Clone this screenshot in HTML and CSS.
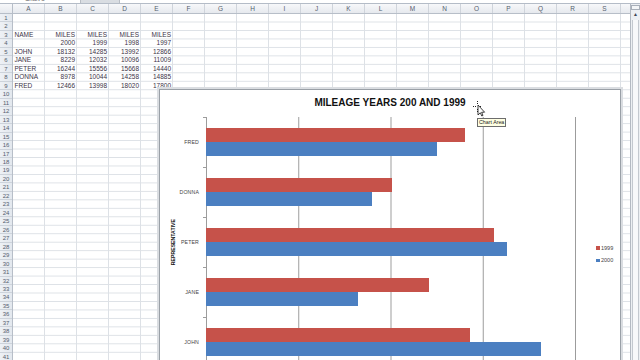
FILE: index.html
```html
<!DOCTYPE html>
<html>
<head>
<meta charset="utf-8">
<link rel="stylesheet" href="styles.css">
</head>
<body>
<div class="topbar"><span class="namebox">Chart 3</span><span class="fxbtn"></span></div>
<div class="sheet">
  <div class="main">
    <div class="colhead">
      <div class="corner"></div>
      <div class="ch">A</div><div class="ch">B</div><div class="ch">C</div><div class="ch">D</div><div class="ch">E</div>
      <div class="ch">F</div><div class="ch">G</div><div class="ch">H</div><div class="ch">I</div><div class="ch">J</div>
      <div class="ch">K</div><div class="ch">L</div><div class="ch">M</div><div class="ch">N</div><div class="ch">O</div>
      <div class="ch">P</div><div class="ch">Q</div><div class="ch">R</div><div class="ch">S</div><div class="ch ch-part"></div>
    </div>
    <div class="grid">
      <div class="rowhead">
        <div class="rh">1</div><div class="rh">2</div><div class="rh">3</div><div class="rh">4</div><div class="rh">5</div>
        <div class="rh">6</div><div class="rh">7</div><div class="rh">8</div><div class="rh">9</div><div class="rh">10</div>
        <div class="rh">11</div><div class="rh">12</div><div class="rh">13</div><div class="rh">14</div><div class="rh">15</div>
        <div class="rh">16</div><div class="rh">17</div><div class="rh">18</div><div class="rh">19</div><div class="rh">20</div>
        <div class="rh">21</div><div class="rh">22</div><div class="rh">23</div><div class="rh">24</div><div class="rh">25</div>
        <div class="rh">26</div><div class="rh">27</div><div class="rh">28</div><div class="rh">29</div><div class="rh">30</div>
        <div class="rh">31</div><div class="rh">32</div><div class="rh">33</div><div class="rh">34</div><div class="rh">35</div>
        <div class="rh">36</div><div class="rh">37</div><div class="rh">38</div><div class="rh">39</div><div class="rh">40</div>
        <div class="rh">41</div>
      </div>
      <div class="cells">
        <div class="row"></div>
        <div class="row"></div>
        <div class="row"><div class="c t">NAME</div><div class="c n">MILES</div><div class="c n">MILES</div><div class="c n">MILES</div><div class="c n">MILES</div></div>
        <div class="row"><div class="c t"></div><div class="c n">2000</div><div class="c n">1999</div><div class="c n">1998</div><div class="c n">1997</div></div>
        <div class="row"><div class="c t">JOHN</div><div class="c n">18132</div><div class="c n">14285</div><div class="c n">13992</div><div class="c n">12866</div></div>
        <div class="row"><div class="c t">JANE</div><div class="c n">8229</div><div class="c n">12032</div><div class="c n">10096</div><div class="c n">11009</div></div>
        <div class="row"><div class="c t">PETER</div><div class="c n">16244</div><div class="c n">15556</div><div class="c n">15668</div><div class="c n">14440</div></div>
        <div class="row"><div class="c t">DONNA</div><div class="c n">8978</div><div class="c n">10044</div><div class="c n">14258</div><div class="c n">14885</div></div>
        <div class="row"><div class="c t">FRED</div><div class="c n">12466</div><div class="c n">13998</div><div class="c n">18020</div><div class="c n">17800</div></div>
      </div>
    </div>
  </div>
  <div class="vscroll">
    <div class="split"></div>
    <div class="arrow">&#9650;</div>
    <div class="thumb"></div>
  </div>
</div>

<div class="chart">
  <div class="chart-title">MILEAGE YEARS 200 AND 1999</div>
  <div class="chart-body">
    <div class="ytitle-wrap"><div class="ytitle">REPRESENTATIVE</div></div>
    <div class="cat-labels">
      <div class="cl">FRED</div>
      <div class="cl">DONNA</div>
      <div class="cl">PETER</div>
      <div class="cl">JANE</div>
      <div class="cl">JOHN</div>
    </div>
    <div class="plot">
      <div class="cat"><div class="bar red" style="width:69.99%"></div><div class="bar blue" style="width:62.33%"></div></div>
      <div class="cat"><div class="bar red" style="width:50.22%"></div><div class="bar blue" style="width:44.89%"></div></div>
      <div class="cat"><div class="bar red" style="width:77.78%"></div><div class="bar blue" style="width:81.22%"></div></div>
      <div class="cat"><div class="bar red" style="width:60.16%"></div><div class="bar blue" style="width:41.15%"></div></div>
      <div class="cat"><div class="bar red" style="width:71.43%"></div><div class="bar blue" style="width:90.66%"></div></div>
    </div>
    <div class="legend">
      <div class="li"><span class="sw red"></span>1999</div>
      <div class="li"><span class="sw blue"></span>2000</div>
    </div>
  </div>
  <div class="tooltip">Chart Area</div>
  <svg class="cursor" width="14" height="16" viewBox="0 0 14 16">
    <g fill="#222">
      <rect x="5" y="0" width="1" height="1"/><rect x="5" y="2" width="1" height="1"/>
      <rect x="5" y="8" width="1" height="1"/><rect x="5" y="10" width="1" height="1"/>
      <rect x="1" y="5" width="1" height="1"/><rect x="3" y="5" width="1" height="1"/>
      <rect x="8" y="5" width="1" height="1"/>
    </g>
    <path d="M6 4 L6 14 L8.3 11.8 L9.8 15 L11 14.4 L9.6 11.3 L12.6 11.2 Z" fill="#fff" stroke="#111" stroke-width="0.8" stroke-linejoin="round"/>
  </svg>
</div>
</body>
</html>
```
FILE: styles.css
```css
html, body {
  margin: 0;
  padding: 0;
}
body {
  width: 640px;
  height: 360px;
  overflow: hidden;
  position: relative;
  background: #ffffff;
  font-family: "Liberation Sans", Arial, sans-serif;
}
.topbar {
  height: 3px;
  border-bottom: 1px solid #b4bcc7;
  background: #ffffff;
  position: relative;
  overflow: hidden;
  display: flex;
}
.namebox {
  font-size: 6px;
  line-height: 6px;
  margin-top: -4px;
  margin-left: 25px;
  color: #555;
  width: 55px;
}
.fxbtn {
  width: 38px;
  background: #d9dde2;
  border-left: 1px solid #b9bec5;
  border-right: 1px solid #b9bec5;
}
.sheet {
  display: flex;
  height: 356px;
}
.main {
  width: 630px;
  display: flex;
  flex-direction: column;
  overflow: hidden;
}
.colhead {
  display: flex;
  height: 10px;
  background: linear-gradient(#f7f8fa, #e6e9ee);
  border-bottom: 1px solid #b7bec8;
  box-sizing: border-box;
}
.corner {
  width: 13px;
  flex: none;
  border-right: 1px solid #b7bec8;
  box-sizing: border-box;
}
.ch {
  width: 32px;
  flex: none;
  box-sizing: border-box;
  border-right: 1px solid #cfd4db;
  font-size: 6.5px;
  line-height: 9px;
  text-align: center;
  color: #55606e;
}
.ch-part {
  width: 9px;
  border-right: none;
}
.grid {
  display: flex;
  flex: 1;
}
.rowhead {
  width: 13px;
  flex: none;
  background: linear-gradient(to right, #eef1f5, #e3e8ee);
  border-right: 1px solid #b7bec8;
  box-sizing: border-box;
}
.rh {
  height: 8.48px;
  box-sizing: border-box;
  border-bottom: 1px solid #cdd3db;
  font-size: 6px;
  line-height: 8px;
  text-align: center;
  color: #55606e;
}
.cells {
  flex: 1;
  background-image:
    linear-gradient(to right, transparent 31px, #dde1e6 31px),
    linear-gradient(to bottom, transparent 7.48px, #dde1e6 7.48px);
  background-size: 32px 100%, 100% 8.48px;
}
.row {
  height: 8.48px;
  display: flex;
}
.c {
  width: 32px;
  flex: none;
  box-sizing: border-box;
  font-size: 6.5px;
  line-height: 8px;
  color: #3c3447;
  white-space: nowrap;
}
.t {
  padding-left: 1.5px;
}
.n {
  text-align: right;
  padding-right: 2px;
}
.vscroll {
  width: 10px;
  flex: none;
  background: #eceff3;
  border-left: 1px solid #b3b9c2;
  box-sizing: border-box;
  display: flex;
  flex-direction: column;
  align-items: center;
}
.split {
  width: 7px;
  height: 3px;
  margin-top: 1px;
  border: 1px solid #a9b0ba;
  background: #f4f6f8;
}
.arrow {
  font-size: 5px;
  line-height: 7px;
  color: #3d4653;
  margin-top: 1px;
}
.thumb {
  flex: 1;
  width: 5px;
  margin-top: 2px;
  border-left: 1px solid #c3c8cf;
  border-right: 1px solid #c3c8cf;
  background: #f7f8fa;
}
.chart {
  position: absolute;
  left: 159px;
  top: 89px;
  width: 460px;
  height: 300px;
  background: #ffffff;
  border: 1px solid #9aa0a7;
  box-shadow: 0 0 0 2px #dadde1;
}
.chart-title {
  height: 27px;
  box-sizing: border-box;
  padding-top: 6px;
  text-align: center;
  font-weight: bold;
  font-size: 10px;
  line-height: 13px;
  color: #111;
}
.chart-body {
  display: flex;
  align-items: flex-start;
}
.ytitle-wrap {
  width: 18px;
  padding-left: 8px;
  box-sizing: border-box;
  height: 250px;
  display: flex;
  justify-content: center;
  align-items: center;
}
.ytitle {
  writing-mode: vertical-rl;
  transform: rotate(180deg);
  font-weight: bold;
  font-size: 5.2px;
  line-height: 6px;
  color: #111;
  white-space: nowrap;
}
.cat-labels {
  width: 21px;
  display: flex;
  flex-direction: column;
}
.cl {
  height: 50px;
  display: flex;
  align-items: center;
  justify-content: flex-end;
  font-size: 5.2px;
  letter-spacing: 0.15px;
  color: #444;
  white-space: nowrap;
}
.plot {
  margin-left: 7px;
  width: 370px;
  height: 250px;
  display: flex;
  flex-direction: column;
  background-image: linear-gradient(to right, #9c9c9c 1px, transparent 1px);
  background-size: 92.25px 100%;
}
.cat {
  height: 50px;
  box-sizing: border-box;
  padding: 11px 0;
  position: relative;
}
.cat::before {
  content: "";
  position: absolute;
  left: -3px;
  top: 0;
  width: 3px;
  height: 1px;
  background: #9c9c9c;
}
.bar {
  height: 14px;
}
.red {
  background: #c6524a;
}
.blue {
  background: #4b7fc1;
}
.legend {
  margin-left: 20px;
  margin-top: 125px;
  display: flex;
  flex-direction: column;
}
.li {
  height: 12.3px;
  display: flex;
  align-items: center;
  font-size: 5.5px;
  color: #444;
}
.sw {
  width: 3.5px;
  height: 3.5px;
  margin-right: 1.5px;
  display: inline-block;
}
.tooltip {
  position: absolute;
  left: 317px;
  top: 28px;
  padding: 0 1px;
  height: 6.5px;
  border: 0.8px solid #6d6d6d;
  background: #ffffe3;
  font-size: 5.3px;
  line-height: 6.5px;
  color: #222;
  white-space: nowrap;
}
.cursor {
  position: absolute;
  left: 312px;
  top: 11px;
}
```
